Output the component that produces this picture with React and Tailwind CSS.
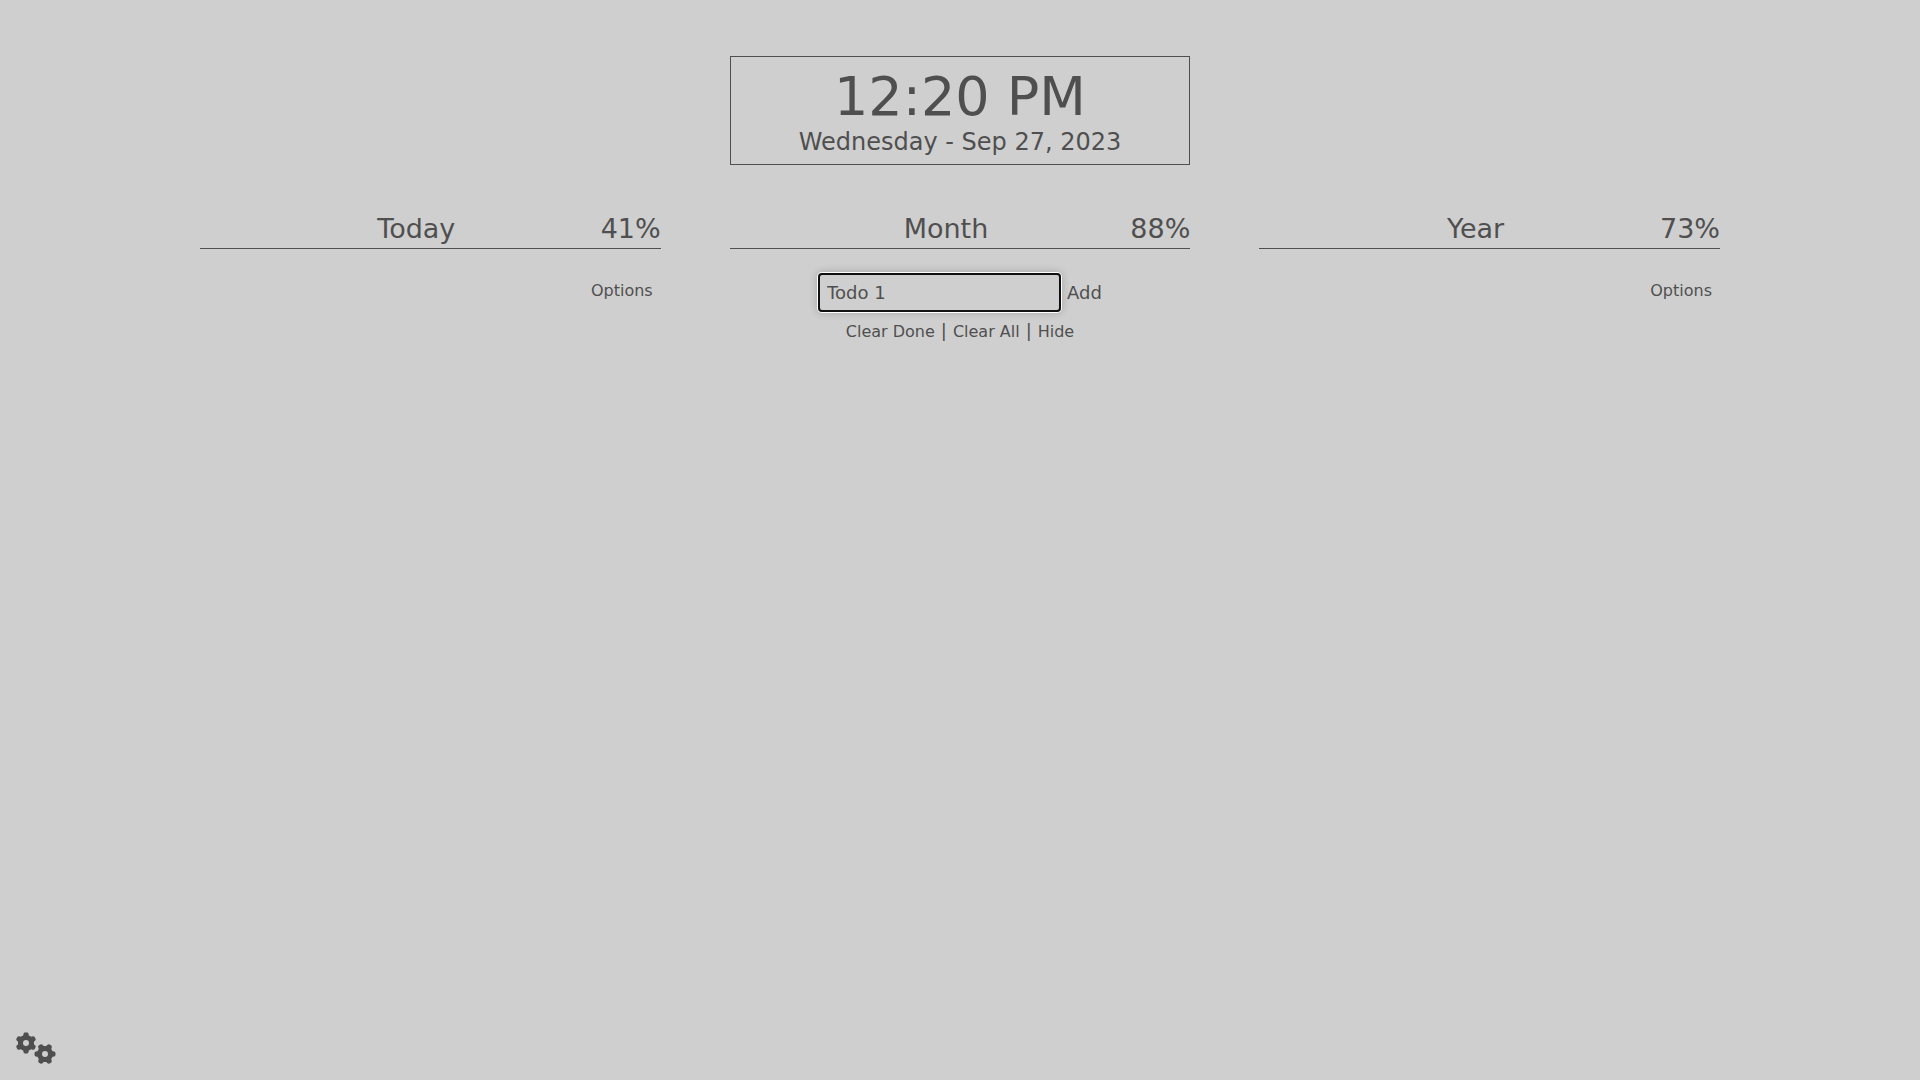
import { useState } from "react";
import { FaGears } from "react-icons/fa6";

function Period({ name, percent, children }) {
  return (
    <section>
      <h2 className="flex h-10 items-center border-b border-[#4f4f4f] text-[27px] leading-8">
        <span className="flex-1 pl-8 text-center">{name}</span>
        <span>{percent}%</span>
      </h2>
      {children}
    </section>
  );
}

function OptionsToggle() {
  return (
    <div className="flex justify-end px-2 pt-8">
      <button type="button" className="text-base leading-5">
        Options
      </button>
    </div>
  );
}

function TodoPanel() {
  const [todo, setTodo] = useState("Todo 1");
  return (
    <div className="flex flex-col items-center gap-[7px] pt-6">
      <form
        className="flex items-center gap-1.5 text-lg leading-6"
        onSubmit={(event) => event.preventDefault()}
      >
        <input
          type="text"
          aria-label="Todo"
          value={todo}
          onChange={(event) => setTodo(event.target.value)}
          className="h-[39px] w-[243px] rounded border-2 border-[#101010] bg-transparent px-[7px] shadow-[0_0_0_1px_#ffffff,0_0_8px_1px_rgba(0,0,0,0.2)] outline-none"
        />
        <button type="submit">Add</button>
      </form>
      <div className="flex items-baseline gap-1.5 text-base leading-6">
        <button type="button">Clear Done</button>
        <span className="text-lg leading-6">|</span>
        <button type="button">Clear All</button>
        <span className="text-lg leading-6">|</span>
        <button type="button">Hide</button>
      </div>
    </div>
  );
}

export default function App() {
  return (
    <div className="flex min-h-screen flex-col bg-[#cfcfcf] font-['DejaVu_Sans',sans-serif] text-[#4f4f4f]">
      <main className="grid flex-1 grid-cols-3 content-start gap-x-[69px] gap-y-11 px-[200px] pt-14">
        <header className="col-start-2 flex flex-col items-center border border-[#4f4f4f] pt-2 pb-[9px] text-center">
          <h1 className="text-[54px] leading-16">12:20 PM</h1>
          <p className="text-2xl leading-[26px]">Wednesday - Sep 27, 2023</p>
        </header>
        <div className="col-span-3 grid grid-cols-3 gap-x-[69px]">
          <Period name="Today" percent={41}>
            <OptionsToggle />
          </Period>
          <Period name="Month" percent={88}>
            <TodoPanel />
          </Period>
          <Period name="Year" percent={73}>
            <OptionsToggle />
          </Period>
        </div>
      </main>
      <footer className="p-4">
        <button type="button" aria-label="Settings" className="block">
          <FaGears className="h-8 w-10" />
        </button>
      </footer>
    </div>
  );
}
